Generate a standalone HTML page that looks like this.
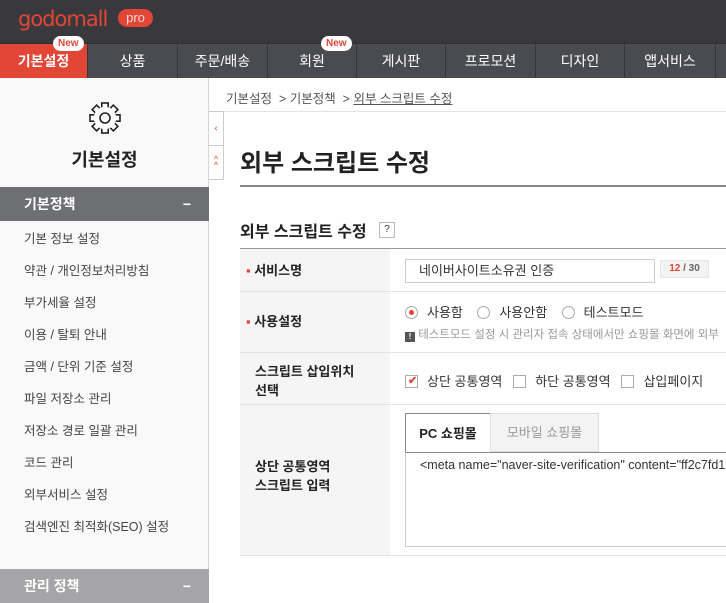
<!DOCTYPE html>
<html><head><meta charset="utf-8">
<style>
*{margin:0;padding:0;box-sizing:border-box}
body{width:726px;height:601px;overflow:hidden;background:#fff;font-family:"Liberation Sans","Noto Sans CJK KR",sans-serif;position:relative;color:#333}
.a{position:absolute}
#hd{left:0;top:0;width:726px;height:43px;background:#39393d}
#nav{left:0;top:43px;width:726px;height:35px;background:#4a4b51;border-top:1px solid #2e2e31}
.ni{position:absolute;top:0;height:34px;line-height:34px;text-align:center;color:#fff;font-size:14px;border-right:1px solid #35363a}
.new{position:absolute;top:-8px;background:#fff;color:#e24637;font-size:10px;font-weight:bold;height:15px;line-height:15px;padding:0 5px;border-radius:8px}
#sb{left:0;top:78px;width:209px;height:523px;background:#f9f9f9;border-right:1px solid #d6d6d6}
.sh{position:absolute;left:0;width:209px;height:34px;line-height:34px;color:#fff;font-size:14px;font-weight:bold;padding-left:24px}
.sh span{position:absolute;right:18px;top:0;font-weight:bold}
.si{position:absolute;left:24px;font-size:12.5px;color:#444}
.lbl{position:absolute;left:240px;width:150px;background:#f5f5f5;font-size:13px;font-weight:bold;color:#222}
.hr{position:absolute;left:240px;width:486px;height:1px;background:#e3e3e3}
.rad{display:inline-block;width:13px;height:13px;border:1px solid #aaa;border-radius:50%;vertical-align:-2px;margin-right:9px;position:relative;background:#fff}
.chk{display:inline-block;width:13px;height:13px;border:1px solid #aaa;vertical-align:-2px;margin-right:9px;background:#fff;position:relative}
</style></head><body>
<div class="a" id="hd">
 <div class="a" style="left:18px;top:7px;font-size:21px;color:#e24637;font-family:'DejaVu Sans',sans-serif;letter-spacing:-1px;line-height:24px">godomall</div>
 <div class="a" style="left:118px;top:9px;width:35px;height:18px;border-radius:9px;background:#e24637;font-size:13px;line-height:17px;text-align:center;color:#f8d8d8">pro</div>
</div>
<div class="a" id="nav">
 <div class="ni" style="left:0;width:88px;background:#e24637;font-weight:bold">기본설정</div>
 <div class="new" style="left:53px">New</div>
 <div class="ni" style="left:88px;width:90px">상품</div>
 <div class="ni" style="left:178px;width:90px">주문/배송</div>
 <div class="ni" style="left:268px;width:89px">회원</div>
 <div class="new" style="left:321px">New</div>
 <div class="ni" style="left:357px;width:89px">게시판</div>
 <div class="ni" style="left:446px;width:90px">프로모션</div>
 <div class="ni" style="left:536px;width:89px">디자인</div>
 <div class="ni" style="left:625px;width:91px">앱서비스</div>
</div>
<div class="a" id="sb">
 <svg class="a" style="left:88px;top:23px" width="34" height="34" viewBox="-17 -17 34 34">
  <g fill="#fff" stroke="#222" stroke-width="1.6">
   <rect x="-3.2" y="-15" width="6.4" height="30"/>
   <rect x="-3.2" y="-15" width="6.4" height="30" transform="rotate(45)"/>
   <rect x="-3.2" y="-15" width="6.4" height="30" transform="rotate(90)"/>
   <rect x="-3.2" y="-15" width="6.4" height="30" transform="rotate(135)"/>
  </g>
  <circle r="11.2" fill="#fff" stroke="none"/>
  <circle r="5" fill="none" stroke="#222" stroke-width="1.6"/>
 </svg>
 <div class="a" style="left:0;width:209px;top:68px;text-align:center;font-size:18px;font-weight:bold;color:#222">기본설정</div>
 <div class="sh" style="top:109px;background:#6e6f73">기본정책<span>−</span></div>
 <div class="si" style="top:150px">기본 정보 설정</div>
 <div class="si" style="top:182px">약관 / 개인정보처리방침</div>
 <div class="si" style="top:214px">부가세율 설정</div>
 <div class="si" style="top:246px">이용 / 탈퇴 안내</div>
 <div class="si" style="top:278px">금액 / 단위 기준 설정</div>
 <div class="si" style="top:310px">파일 저장소 관리</div>
 <div class="si" style="top:342px">저장소 경로 일괄 관리</div>
 <div class="si" style="top:374px">코드 관리</div>
 <div class="si" style="top:406px">외부서비스 설정</div>
 <div class="si" style="top:438px">검색엔진 최적화(SEO) 설정</div>
 <div class="sh" style="top:491px;background:#a5a5a7">관리 정책<span>−</span></div>
</div>
<div class="a" style="left:226px;top:88px;font-size:12.5px;color:#555">기본설정 &nbsp;&gt; 기본정책 &nbsp;&gt; <u>외부 스크립트 수정</u></div>
<div class="a" style="left:210px;top:111px;width:516px;height:1px;background:#e3e3e3"></div>
<div class="a" style="left:209px;top:111px;width:15px;height:35px;border:1px solid #ccc;border-left:none;background:#fff;color:#e24637;font-size:10px;text-align:center;line-height:33px">‹</div>
<div class="a" style="left:209px;top:145px;width:15px;height:35px;border:1px solid #ccc;border-left:none;background:#fff;color:#e24637;font-size:9px;text-align:center;line-height:6px;padding-top:10px">^<br>^</div>
<div class="a" style="left:240px;top:143px;font-size:24px;font-weight:bold;color:#222">외부 스크립트 수정</div>
<div class="a" style="left:240px;top:185px;width:486px;height:2px;background:#888"></div>
<div class="a" style="left:240px;top:218px;font-size:16px;font-weight:bold;color:#222">외부 스크립트 수정</div>
<div class="a" style="left:379px;top:222px;width:16px;height:16px;border:1px solid #bbb;font-size:10px;text-align:center;line-height:14px;color:#333">?</div>
<div class="a" style="left:240px;top:248px;width:486px;height:1px;background:#999"></div>
<div class="lbl" style="top:249px;height:43px;line-height:43px;padding-left:6px"><span style="color:#e24637">▪</span> 서비스명</div>
<div class="hr" style="top:291px"></div>
<div class="lbl" style="top:292px;height:60px;line-height:60px;padding-left:6px"><span style="color:#e24637">▪</span> 사용설정</div>
<div class="hr" style="top:352px"></div>
<div class="lbl" style="top:353px;height:51px;padding:9px 0 0 15px;line-height:19px">스크립트 삽입위치<br>선택</div>
<div class="hr" style="top:404px"></div>
<div class="lbl" style="top:405px;height:150px;padding:52px 0 0 15px;line-height:19px">상단 공통영역<br>스크립트 입력</div>
<div class="hr" style="top:555px"></div>
<div class="a" style="left:405px;top:259px;width:250px;height:24px;border:1px solid #ccc;font-size:13px;line-height:22px;padding-left:13px;color:#333">네이버사이트소유권 인증</div>
<div class="a" style="left:660px;top:260px;width:49px;height:18px;background:#f3f3f3;border:1px solid #e6e6e6;font-size:10px;font-weight:bold;line-height:16px;text-align:center;color:#666"><span style="color:#e24637">12</span> / 30</div>
<div class="a" style="left:405px;top:302px;font-size:13px;color:#333;white-space:nowrap"><span class="rad"><span style="position:absolute;left:3px;top:3px;width:5px;height:5px;border-radius:50%;background:#e24637"></span></span>사용함 &nbsp;&nbsp;&nbsp;<span class="rad"></span>사용안함 &nbsp;&nbsp;&nbsp;<span class="rad"></span>테스트모드</div>
<div class="a" style="left:405px;top:326px;font-size:11.5px;color:#999;white-space:nowrap"><span style="display:inline-block;width:10px;height:10px;background:#555;color:#fff;font-size:8px;line-height:10px;text-align:center;font-weight:bold;vertical-align:-1px">!</span> 테스트모드 설정 시 관리자 접속 상태에서만 쇼핑몰 화면에 외부</div>
<div class="a" style="left:405px;top:371px;font-size:13px;color:#333;white-space:nowrap"><span class="chk"><span style="position:absolute;left:2px;top:-2px;color:#e24637;font-size:11px;font-weight:bold">✔</span></span>상단 공통영역 &nbsp;&nbsp;<span class="chk"></span>하단 공통영역 &nbsp;&nbsp;<span class="chk"></span>삽입페이지</div>
<div class="a" style="left:405px;top:413px;width:86px;height:40px;border:1px solid #888;border-bottom:none;background:#fff;font-size:13px;font-weight:bold;text-align:center;line-height:40px;color:#222">PC 쇼핑몰</div>
<div class="a" style="left:490px;top:413px;width:109px;height:39px;border:1px solid #ddd;background:#f3f3f3;font-size:13px;text-align:center;line-height:38px;color:#999">모바일 쇼핑몰</div>
<div class="a" style="left:405px;top:452px;width:330px;height:95px;border:1px solid #ccc;border-top:1px solid #888;font-size:12.5px;padding:5px 0 0 14px;color:#333;white-space:nowrap;overflow:hidden">&lt;meta name="naver-site-verification" content="ff2c7fd12</div>
</body></html>
